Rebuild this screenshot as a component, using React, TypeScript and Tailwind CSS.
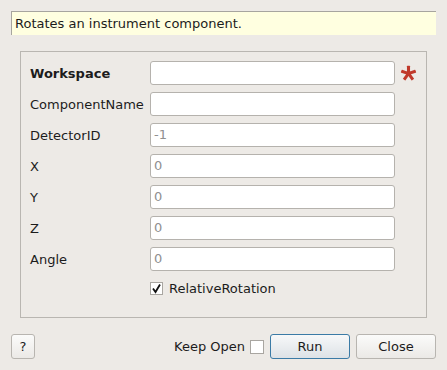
import React from "react";

const font = { fontFamily: '"DejaVu Sans", sans-serif' };

function Field({ label, bold, placeholder, required }: { label: string; bold?: boolean; placeholder?: string; required?: boolean }) {
  return (
    <div className="flex items-center h-[24px]">
      <div className={`w-[120px] pt-[1px] text-[13px] text-[#1c1c1c] ${bold ? "font-bold" : ""}`}>{label}</div>
      <div className="w-[245px] h-[24px] bg-white border border-[#b5b2ad] rounded-[3px] flex items-center pl-[3px] text-[13px] text-[#909090]">
        {placeholder ?? ""}
      </div>
      {required && (
        <svg width="17" height="17" viewBox="-10 -10 20 20" className="ml-[5px]">
          <g fill="#c0392b">
            {[0, 72, 144, 216, 288].map((a) => (
              <rect key={a} x="-1.8" y="-9" width="3.6" height="9" rx="0.6" transform={`rotate(${a})`} />
            ))}
            <circle cx="0" cy="0" r="2.8" />
          </g>
        </svg>
      )}
    </div>
  );
}

export default function App() {
  return (
    <div className="w-[447px] h-[370px] bg-[#edeae6] overflow-hidden pt-[11px]" style={font}>
      <div className="ml-[11px] w-[425px] h-[24px] bg-[#ffffe0] border-t border-l border-[#a7a59f] flex items-center pl-[3px] text-[13px] text-[#1c1c1c]">
        Rotates an instrument component.
      </div>
      <div className="ml-[20px] mt-[16px] w-[407px] h-[267px] border border-[#b9b6b1] pl-[9px] pt-[9px] flex flex-col gap-[7px]">
        <Field label="Workspace" bold required />
        <Field label="ComponentName" />
        <Field label="DetectorID" placeholder="-1" />
        <Field label="X" placeholder="0" />
        <Field label="Y" placeholder="0" />
        <Field label="Z" placeholder="0" />
        <Field label="Angle" placeholder="0" />
        <div className="flex items-center h-[14px] mt-[3px] pl-[120px]">
          <div className="w-[13px] h-[13px] bg-white border border-[#a9a6a1] flex items-center justify-center">
            <svg width="11" height="11" viewBox="0 0 11 11">
              <path d="M2 5.5 L4.5 9 L9 1.5" stroke="#111" strokeWidth="1.8" fill="none" />
            </svg>
          </div>
          <span className="ml-[6px] pt-[1px] text-[13px] text-[#1c1c1c]">RelativeRotation</span>
        </div>
      </div>
      <div className="flex items-center mt-[16px] h-[25px] px-[11px]">
        <div className="w-[24px] h-[25px] border border-[#b8b5b0] rounded-[3px] bg-gradient-to-b from-[#fbfbfa] to-[#ebe9e6] flex items-center justify-center text-[13px] text-[#1c1c1c]">
          ?
        </div>
        <div className="flex-1" />
        <span className="text-[13px] text-[#1c1c1c]">Keep Open</span>
        <div className="ml-[5px] w-[14px] h-[14px] bg-white border border-[#a9a6a1]" />
        <div className="ml-[6px] w-[80px] h-[25px] border border-[#3b7ba6] rounded-[3px] bg-gradient-to-b from-[#f7f8f9] to-[#dde2e6] flex items-center justify-center text-[13px] text-[#1c1c1c]">
          Run
        </div>
        <div className="ml-[6px] w-[80px] h-[25px] border border-[#b8b5b0] rounded-[3px] bg-gradient-to-b from-[#fbfbfa] to-[#ebe9e6] flex items-center justify-center text-[13px] text-[#1c1c1c]">
          Close
        </div>
      </div>
    </div>
  );
}
